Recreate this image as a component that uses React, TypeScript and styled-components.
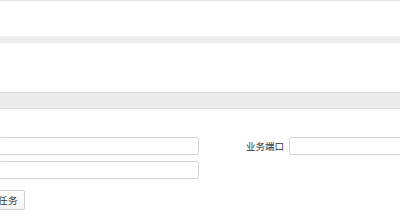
import styled, { createGlobalStyle } from 'styled-components'

const GlobalStyle = createGlobalStyle`
  html, body {
    margin: 0;
    padding: 0;
    background: #ffffff;
    overflow: hidden;
    font-family: "Liberation Sans", "Noto Sans CJK SC", sans-serif;
  }
`

const Page = styled.div`
  width: 400px;
  height: 222px;
  overflow: hidden;
  background: #eeeeee;
  display: flex;
  flex-direction: column;
`

const TopPanel = styled.div`
  height: 35px;
  background: #ffffff;
  border-top: 1px solid #e2e2e2;
  border-bottom: 1px solid #f2f2f2;
`

const Spacer = styled.div`
  height: 6px;
`

const SearchPanel = styled.div`
  height: 49px;
  background: #ffffff;
  border-bottom: 1px solid #d6d6d6;
`

const SectionHeader = styled.div`
  height: 15px;
  background: #ececec;
  border-bottom: 1px solid #dedede;
`

const Content = styled.div`
  flex: 1;
  background: #ffffff;
  padding-top: 28px;
`

const Form = styled.div`
  margin-left: -79px;
  display: grid;
  grid-template-columns: 278px 289px;
  column-gap: 1px;
  row-gap: 6px;
`

const Field = styled.div`
  display: flex;
  align-items: center;
  justify-content: flex-end;
  gap: 5px;
`

const Label = styled.span`
  font-size: 9.5px;
  color: #333333;
  white-space: nowrap;
`

const Input = styled.input<{ $w: number }>`
  box-sizing: border-box;
  width: ${p => p.$w}px;
  height: 18px;
  border: 1px solid #d4d4d4;
  border-radius: 2px;
  background: #ffffff;
  padding: 0 4px;
  outline: none;
`

const Actions = styled.div`
  margin-top: 11px;
  margin-left: -29px;
  display: flex;
`

const Button = styled.button`
  box-sizing: border-box;
  height: 20px;
  padding: 0 6px;
  border: 1px solid #cfcfcf;
  border-radius: 2px;
  background: linear-gradient(#ffffff, #f2f2f2);
  font-family: "Liberation Sans", "Noto Sans CJK SC", sans-serif;
  font-size: 9.5px;
  color: #333333;
  letter-spacing: 0.5px;
`

export default function App() {
  return (
    <Page>
      <GlobalStyle />
      <TopPanel />
      <Spacer />
      <SearchPanel />
      <SectionHeader />
      <Content>
        <Form>
          <Field>
            <Label>业务名称</Label>
            <Input $w={200} />
          </Field>
          <Field>
            <Label>业务端口</Label>
            <Input $w={200} />
          </Field>
          <Field>
            <Label>业务地址</Label>
            <Input $w={200} />
          </Field>
        </Form>
        <Actions>
          <Button>新建任务</Button>
        </Actions>
      </Content>
    </Page>
  )
}
